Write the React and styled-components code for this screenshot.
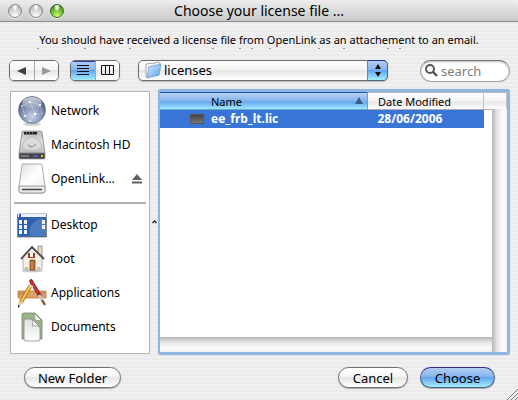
import React from 'react';
import styled, { createGlobalStyle, css } from 'styled-components';

const Global = createGlobalStyle`
  * { box-sizing: border-box; }
  body { margin: 0; background: #eee; }
  body, button, input, select, table { font-family: "Noto Sans", "Open Sans", sans-serif; color: #000; }
`;

const Dialog = styled.main`
  display: flex;
  flex-direction: column;
  min-height: 100vh;
  background: repeating-linear-gradient(#f0f0f0 0 2px, #ebebeb 2px 4px);
`;

const TitleBar = styled.header`
  display: grid;
  grid-template-columns: 72px 1fr 72px;
  align-items: center;
  height: 22px;
  padding-left: 8px;
  padding-right: 8px;
  border-bottom: 1px solid #8e8e8e;
  border-radius: 6px 6px 0 0;
  background: linear-gradient(#ededed, #c9c9c9);
`;

const Lights = styled.div`
  display: flex;
  gap: 7px;
`;

const Light = styled.button`
  width: 14px;
  height: 14px;
  padding: 0;
  border: 1px solid ${p => (p.$green ? '#42652a' : '#858585')};
  border-radius: 50%;
  background: ${p => p.$green
    ? 'radial-gradient(ellipse at 50% 15%, #e8f8d8 0 15%, transparent 35%), radial-gradient(circle at 50% 90%, #c6ff74, #69b32d 55%, #35701a)'
    : 'radial-gradient(ellipse at 50% 12%, #fff 0 12%, transparent 32%), radial-gradient(circle at 50% 90%, #fff, #cfcfcf 55%, #a2a2a2)'};
  box-shadow: 0 1px 0 #f4f4f4;
`;

const Title = styled.h1`
  margin: 0;
  text-align: center;
  font-size: 14px;
  font-weight: 400;
  line-height: 20px;
  white-space: nowrap;
`;

const Message = styled.p`
  margin: 9px 0 0;
  text-align: center;
  font-size: 11px;
  line-height: 17px;
  white-space: nowrap;
`;

const Specks = styled.svg`
  align-self: center;
  width: 456px;
  height: 2px;
`;

const Toolbar = styled.div`
  display: flex;
  align-items: center;
  height: 21px;
  margin: 10px 8px 0 9px;
`;

const aqua = css`background: linear-gradient(#b4cdf2 0, #83b4ee 48%, #62a5ee 50%, #a6edff 100%);`;
const silver = css`background: linear-gradient(#fff 0, #f4f4f4 48%, #e6e6e6 50%, #fff 100%);`;

const Segments = styled.div`
  display: flex;
  width: 50px;
  height: 21px;
  margin-right: 11px;
  overflow: hidden;
  border: 1px solid #6c6c6c;
  border-radius: 5px;
  box-shadow: 0 1px 1px #bbb;
`;

const Segment = styled.button`
  display: flex;
  flex: 1;
  align-items: center;
  justify-content: center;
  padding: 0;
  border: 0;
  ${p => (p.$on ? aqua : silver)}
  box-shadow: ${p => (p.$on ? 'inset 0 1px #2d3f9c' : 'none')};
  & + & { border-left: 1px solid #aaa; }
`;

const Popup = styled.div`
  position: relative;
  flex: 1;
  height: 21px;
  margin: 0 32px 0 7px;
`;

const Select = styled.select`
  display: block;
  appearance: none;
  width: 100%;
  height: 21px;
  padding: 0 28px 0 25px;
  border: 1px solid #6c6c6c;
  border-radius: 5px;
  ${silver}
  box-shadow: 0 1px 1px #bbb;
  font-size: 13px;
  line-height: 17px;
`;

const PopupFolder = styled.svg`
  position: absolute;
  left: 7px;
  top: 1px;
  pointer-events: none;
`;

const PopupArrows = styled.span`
  position: absolute;
  right: 0;
  top: 0;
  display: flex;
  align-items: center;
  justify-content: center;
  width: 21px;
  height: 21px;
  border: 1px solid #38529a;
  border-color: #2a2f88 #47698f #4d6d78 #5d87ba;
  border-radius: 0 5px 5px 0;
  ${aqua}
  pointer-events: none;
`;

const Search = styled.label`
  display: flex;
  align-items: center;
  gap: 3px;
  width: 90px;
  height: 22px;
  padding: 0 4px;
  border: 1px solid #a5a5a5;
  border-top-color: #777;
  border-radius: 11px;
  background: #fff;
  box-shadow: inset 0 1px 2px #bbb;
  & > svg { flex: none; }
`;

const SearchInput = styled.input`
  width: 100%;
  min-width: 0;
  padding: 0;
  border: 0;
  outline: 0;
  background: transparent;
  font-size: 13px;
  line-height: 18px;
  &::placeholder { color: #808080; opacity: 1; }
`;

const Content = styled.div`
  display: grid;
  grid-template-columns: 140px 8px 1fr;
  flex: 1;
  margin: 8px 8px 0 10px;
`;

const Sidebar = styled.nav`
  margin: 2px 0 1px;
  padding: 2px 3px 6px;
  border: 1px solid #b4b4b4;
  background: #fff;
`;

const PlaceList = styled.ul`
  margin: 0;
  padding: 0;
  list-style: none;
`;

const Place = styled.button`
  display: flex;
  align-items: center;
  gap: 4px;
  width: 100%;
  height: 34px;
  padding: 0 4px 0 3px;
  border: 0;
  background: transparent;
  font-size: 12px;
  line-height: 18px;
  text-align: left;
  white-space: nowrap;
  & > svg:last-child:not(:first-child) { margin-left: auto; }
`;

const Divider = styled.hr`
  height: 2px;
  margin: 6px 0 4px;
  border: 0;
  background: #b0b0b0;
`;

const Splitter = styled.div`
  display: flex;
  align-items: center;
  justify-content: center;
`;

const FilePane = styled.section`
  display: grid;
  grid-template-columns: 1fr 15px;
  grid-template-rows: auto 1fr 15px;
  border: 3px solid #8fb6de;
  border-left-width: 2px;
  border-radius: 3px;
  box-shadow: 0 0 1px #a8c6e6;
  background: #fff;
`;

const Files = styled.table`
  grid-area: 1 / 1 / 2 / 3;
  width: 100%;
  table-layout: fixed;
  border-collapse: collapse;
`;

const NameCol = styled.col``;
const DateCol = styled.col`width: 116px;`;
const EndCol = styled.col`width: 23px;`;

const Heading = styled.th`
  height: 17px;
  padding: 0 0 0 ${p => (p.$name ? '51px' : '10px')};
  border-top: 1px solid ${p => (p.$name ? '#1854a9' : '#b5b5b5')};
  border-right: 1px solid ${p => (p.$name ? '#6c9dcc' : '#c4c4c4')};
  border-bottom: 1px solid ${p => (p.$name ? '#67a9c9' : '#b0b0b0')};
  ${p => (p.$name ? aqua : silver)}
  font-size: 11px;
  font-weight: 400;
  line-height: 15px;
  text-align: left;
  white-space: nowrap;
`;

const HeadingInner = styled.div`
  display: flex;
  align-items: center;
  justify-content: space-between;
  padding-right: 4px;
`;

const Cell = styled.td`
  height: 18px;
  padding: 0 0 0 ${p => (p.$name ? '30px' : '10px')};
  background: ${p => (p.$blank ? '#fff' : '#3875d7')};
  color: #fff;
  font-size: 12px;
  font-weight: 700;
  line-height: 18px;
  white-space: nowrap;
`;

const FileName = styled.div`
  display: flex;
  align-items: center;
  gap: 7px;
`;

const FileIcon = styled.span`
  width: 14px;
  height: 10px;
  border: 1px solid #555;
  background: linear-gradient(#444, #777);
`;

const VTrack = styled.div`
  grid-area: 1 / 2 / 4 / 3;
  margin-top: 17px;
  background: linear-gradient(90deg, #b5b5b5, #e6e6e6 35%, #fbfbfb 70%, #f2f2f2);
`;

const HTrack = styled.div`
  grid-area: 3 / 1 / 4 / 2;
  background: linear-gradient(#b5b5b5, #e6e6e6 35%, #fbfbfb 70%, #f2f2f2);
`;

const Footer = styled.footer`
  display: grid;
  grid-template-columns: 97px 1fr 70px 75px;
  column-gap: 12px;
  align-items: start;
  height: 45px;
  padding: 12px 23px 0 24px;
  position: relative;
`;

const Push = styled.button`
  height: 21px;
  padding: 0;
  border: 1px solid ${p => (p.$primary ? '#4b5e83' : '#707070')};
  border-top-color: ${p => (p.$primary ? '#342c8b' : '#707070')};
  border-radius: 11px;
  ${p => (p.$primary ? aqua : silver)}
  box-shadow: 0 1px 1px #aaa;
  font-size: 13px;
  line-height: 18px;
  white-space: nowrap;
`;

const Grip = styled.svg`
  position: absolute;
  right: 0;
  bottom: 0;
`;

const Network = () => (
  <svg width="30" height="34" viewBox="0 0 30 34" aria-hidden="true">
    <defs>
      <radialGradient id="globe" cx=".5" cy=".75" r=".75">
        <stop offset="0" stopColor="#c5cfe6" /><stop offset=".55" stopColor="#7d8bae" /><stop offset="1" stopColor="#3b4870" />
      </radialGradient>
      <linearGradient id="globeShine" x2="0" y2="1"><stop offset="0" stopColor="#fff" stopOpacity=".75" /><stop offset="1" stopColor="#fff" stopOpacity=".1" /></linearGradient>
    </defs>
    <ellipse cx="15" cy="30" rx="9" ry="2" fill="#d4d4d4" />
    <circle cx="15" cy="16" r="13.5" fill="url(#globe)" stroke="#56627f" strokeWidth=".6" />
    <ellipse cx="15" cy="9" rx="10" ry="6" fill="url(#globeShine)" />
    <path d="M5 12L13 8L23 11L18 20L8 22L5 12M13 8L18 20L25 20M18 20L13 27L8 22M23 11L25 20" fill="none" stroke="#e3eaff" strokeWidth=".6" opacity=".6" />
    <g fill="#fff"><circle cx="13" cy="8" r="1" /><circle cx="23" cy="11" r="1" /><circle cx="18" cy="20" r="1.2" /><circle cx="8" cy="22" r="1" /><circle cx="5" cy="12" r=".8" /><circle cx="13" cy="27" r=".8" /></g>
  </svg>
);

const HardDisk = () => (
  <svg width="30" height="34" viewBox="0 0 30 34" aria-hidden="true">
    <defs><linearGradient id="disk" x2="0" y2="1"><stop offset="0" stopColor="#b5b5b5" /><stop offset=".5" stopColor="#e2e2e2" /><stop offset="1" stopColor="#bababa" /></linearGradient></defs>
    <path d="M5 4Q5 3 6 3H23Q25 3 25 4L28 25H2Z" fill="url(#disk)" stroke="#888" strokeWidth=".8" />
    <path d="M7 4h13v2.5H7z" fill="#222" /><path d="M9 5h1m2 0h1m2 0h1" stroke="#aaa" />
    <path d="M5 20Q6 10 15 9Q24 10 25 20Q15 25 5 20Z" fill="#dadada" stroke="#bcbcbc" />
    <path d="M11 17Q15 21 19 16" fill="none" stroke="#969696" strokeWidth="1.2" />
    <path d="M2 25H28V30Q28 31 27 31H3Q2 31 2 30Z" fill="#42444a" stroke="#999" strokeWidth=".8" />
    <path d="M4 27h8v2H4z" fill="#77787d" /><path d="M16 27h5v2h-5z" fill="#5660a8" /><path d="M24 27h2v2h-2z" fill="#d8d02b" />
  </svg>
);

const Volume = () => (
  <svg width="30" height="34" viewBox="0 0 30 34" aria-hidden="true">
    <defs><linearGradient id="vol" x1="0" y1="0" x2="1" y2="1"><stop offset="0" stopColor="#dedede" /><stop offset=".5" stopColor="#fff" /><stop offset="1" stopColor="#eee" /></linearGradient></defs>
    <path d="M5 3Q5 2 6 2H23Q25 2 25 3L28 24V29Q28 31 26 31H4Q2 31 2 29V24Z" fill="url(#vol)" stroke="#999" strokeWidth=".8" />
    <path d="M2 24H28V29Q28 31 26 31H4Q2 31 2 29Z" fill="#e9e9e9" stroke="#888" strokeWidth=".8" /><path d="M5 27.5h20" stroke="#444" strokeWidth="1.5" />
  </svg>
);

const Desktop = () => (
  <svg width="30" height="34" viewBox="0 0 30 34" aria-hidden="true">
    <defs><linearGradient id="desk" x2="0" y2="1"><stop offset="0" stopColor="#315da9" /><stop offset="1" stopColor="#2b64b4" /></linearGradient></defs>
    <path d="M.5 6H29.5V29H.5Z" fill="url(#desk)" stroke="#777" strokeWidth=".8" />
    <path d="M13 28C11 19 15 13 25 10L29 16V28Z" fill="#7da2d2" opacity=".4" />
    <path d="M1 6h28v3H1z" fill="#edf3ff" /><path d="M2 6h2v3H2z" fill="#3158e0" />
    <g fill="#eef3fb"><path d="M2 12h3v4H2zM7 12h3v4H7zM2 17h3v4H2zM7 17h3v4H7zM2 22h3v4H2zM7 22h3v4H7zM25 12h3v4h-3zM25 17h3v4h-3z" /></g>
  </svg>
);

const Home = () => (
  <svg width="30" height="34" viewBox="0 0 30 34" aria-hidden="true">
    <ellipse cx="15" cy="29" rx="11" ry="1.5" fill="#ccc" />
    <path d="M21 4h4v10h-4z" fill="#e9dfc8" stroke="#77705f" strokeWidth=".7" />
    <path d="M6 15L15 6L25 15V27L17 29L6 27Z" fill="#f3efe5" stroke="#9a958a" strokeWidth=".7" />
    <path d="M4 17L15 5L27 17" fill="none" stroke="#484848" strokeWidth="1.8" />
    <path d="M11 11h7v5h-7z" fill="#a8381d" /><path d="M13 11h3v4h-3z" fill="#fff" />
    <path d="M13 18h5v10h-5z" fill="#b56b2d" stroke="#805330" strokeWidth=".8" /><path d="M15 20v7" stroke="#e0a15f" />
    <path d="M8 26h3m9 0h3" stroke="#8c9870" />
  </svg>
);

const Applications = () => (
  <svg width="30" height="34" viewBox="0 0 30 34" aria-hidden="true">
    <path d="M1 15h28v7H1z" fill="#dba16b" stroke="#b97a46" strokeWidth=".8" />
    <path d="M3 16v3m3-3v2m3-2v3m12-3v2m3-2v3m3-3v2" stroke="#8f582e" strokeWidth=".7" />
    <path d="M14 5L23 20" stroke="#931f22" strokeWidth="3.6" strokeLinecap="round" />
    <path d="M14 5L21 17" stroke="#de4946" strokeWidth="1.4" strokeLinecap="round" />
    <path d="M22 19L25 24" stroke="#ccc" strokeWidth="3" /><path d="M25 24l3 5" stroke="#8a4d22" strokeWidth="2.4" />
    <path d="M14 9L4 26" stroke="#a96c14" strokeWidth="4" /><path d="M14 9L4 26" stroke="#f4c84d" strokeWidth="2.4" />
    <path d="M2 25l4 2-5 4z" fill="#eac69a" /><path d="M1 29l2 1-2 2z" fill="#222" />
    <path d="M12 9l4 2" stroke="#d8d8d8" strokeWidth="2" /><path d="M14 5l3 2-1 3-3-2z" fill="#c83732" />
  </svg>
);

const Documents = () => (
  <svg width="30" height="34" viewBox="0 0 30 34" aria-hidden="true">
    <defs><linearGradient id="paper" x2="0" y2="1"><stop offset="0" stopColor="#e0e0e0" /><stop offset="1" stopColor="#fff" /></linearGradient></defs>
    <path d="M5 5Q5 3 7 3H18L25 10V29H5Z" fill="#99b587" stroke="#73895f" strokeWidth=".8" />
    <path d="M17 3L25 11L18 10Z" fill="#f1f7eb" stroke="#819378" strokeWidth=".7" />
    <path d="M7 11Q7 9 9 9H15L23 17V29Q23 31 21 31H9Q7 31 7 29Z" fill="url(#paper)" stroke="#888" strokeWidth=".8" />
    <path d="M15 9Q17 13 15 16Q20 15 23 17Z" fill="#fff" stroke="#888" strokeWidth=".8" />
  </svg>
);

const Eject = () => (
  <svg width="10" height="10" viewBox="0 0 10 10" role="img" aria-label="Eject">
    <path d="M5 0L10 6H0ZM0 7.5h10v2H0z" fill="#606060" />
  </svg>
);

const volumes = [
  { name: 'Network', Icon: Network },
  { name: 'Macintosh HD', Icon: HardDisk },
  { name: 'OpenLink…', Icon: Volume, eject: true },
];
const folders = [
  { name: 'Desktop', Icon: Desktop },
  { name: 'root', Icon: Home },
  { name: 'Applications', Icon: Applications },
  { name: 'Documents', Icon: Documents },
];

const Places = ({ items }) => (
  <PlaceList>
    {items.map(({ name, Icon, eject }) => (
      <li key={name}><Place type="button"><Icon /><span>{name}</span>{eject && <Eject />}</Place></li>
    ))}
  </PlaceList>
);

export default function App() {
  return (
    <>
      <Global />
      <Dialog>
        <TitleBar>
          <Lights>
            <Light type="button" aria-label="Close" />
            <Light type="button" aria-label="Minimize" />
            <Light type="button" aria-label="Zoom" $green />
          </Lights>
          <Title>Choose your license file ...</Title>
        </TitleBar>
        <Message>You should have received a license file from OpenLink as an attachement to an email.</Message>
        <Specks viewBox="0 0 456 2" aria-hidden="true">
          <path d="M6 .5h2M53 .5h2M98 .5h2M181 .5h2M208 .5h2M220 .5h2M238 .5h2M287 .5h2M312 .5h2M356 .5h2M368 .5h2" stroke="#999" />
        </Specks>
        <Toolbar>
          <Segments>
            <Segment type="button" aria-label="Back"><svg width="9" height="8"><path d="M0 4L9 0V8Z" fill="#404040" /></svg></Segment>
            <Segment type="button" aria-label="Forward"><svg width="9" height="8"><path d="M9 4L0 0V8Z" fill="#999" /></svg></Segment>
          </Segments>
          <Segments>
            <Segment type="button" aria-label="List view" aria-pressed="true" $on><svg width="12" height="11"><path d="M0 .5h12M0 3.5h12M0 6.5h12M0 9.5h12" stroke="#111" /></svg></Segment>
            <Segment type="button" aria-label="Column view"><svg width="13" height="11"><path d="M.5.5h12v9H.5zM4.5 0v10M8.5 0v10" fill="none" stroke="#111" /></svg></Segment>
          </Segments>
          <Popup>
            <Select aria-label="Folder" defaultValue="licenses"><option>licenses</option></Select>
            <PopupFolder width="18" height="18" viewBox="0 0 18 18" aria-hidden="true">
              <defs><linearGradient id="folder" x2="1" y2="1"><stop offset="0" stopColor="#d9efff" /><stop offset="1" stopColor="#5b9fe2" /></linearGradient></defs>
              <path d="M1 3L6 2L7 3L13 1L15 2L13 14L1 16Z" fill="#f0f5fa" stroke="#8a98a5" strokeWidth=".8" />
              <path d="M4 6L16 3L14 14L2 17Z" fill="url(#folder)" stroke="#6a9ccb" strokeWidth=".8" />
            </PopupFolder>
            <PopupArrows><svg width="6" height="13"><path d="M3 0L6 5H0ZM3 13L6 8H0Z" fill="#111" /></svg></PopupArrows>
          </Popup>
          <Search>
            <svg width="13" height="13" viewBox="0 0 13 13" aria-hidden="true"><circle cx="5" cy="5" r="4" fill="none" stroke="#555" strokeWidth="2" /><path d="M8 8l4 4" stroke="#555" strokeWidth="2.4" /></svg>
            <SearchInput type="text" placeholder="search" aria-label="Search" />
          </Search>
        </Toolbar>
        <Content>
          <Sidebar aria-label="Places">
            <Places items={volumes} />
            <Divider />
            <Places items={folders} />
          </Sidebar>
          <Splitter><svg width="5" height="4" aria-hidden="true"><path d="M.5 3L2.5 1L4.5 3" fill="none" stroke="#222" strokeWidth="1.3" /></svg></Splitter>
          <FilePane>
            <Files>
              <colgroup><NameCol /><DateCol /><EndCol /></colgroup>
              <thead>
                <tr>
                  <Heading $name scope="col" aria-sort="ascending">
                    <HeadingInner>Name<svg width="8" height="8" aria-hidden="true"><path d="M4 0L8 7H0Z" fill="#3a5f86" /></svg></HeadingInner>
                  </Heading>
                  <Heading scope="col">Date Modified</Heading>
                  <Heading as="td" />
                </tr>
              </thead>
              <tbody>
                <tr>
                  <Cell $name><FileName><FileIcon />ee_frb_lt.lic</FileName></Cell>
                  <Cell>28/06/2006</Cell>
                  <Cell $blank />
                </tr>
              </tbody>
            </Files>
            <VTrack />
            <HTrack />
          </FilePane>
        </Content>
        <Footer>
          <Push type="button">New Folder</Push>
          <span />
          <Push type="button">Cancel</Push>
          <Push type="submit" $primary>Choose</Push>
          <Grip width="11" height="11" aria-hidden="true"><path d="M0 11L11 0M4 11L11 4M8 11L11 8" stroke="#777" /></Grip>
        </Footer>
      </Dialog>
    </>
  );
}
